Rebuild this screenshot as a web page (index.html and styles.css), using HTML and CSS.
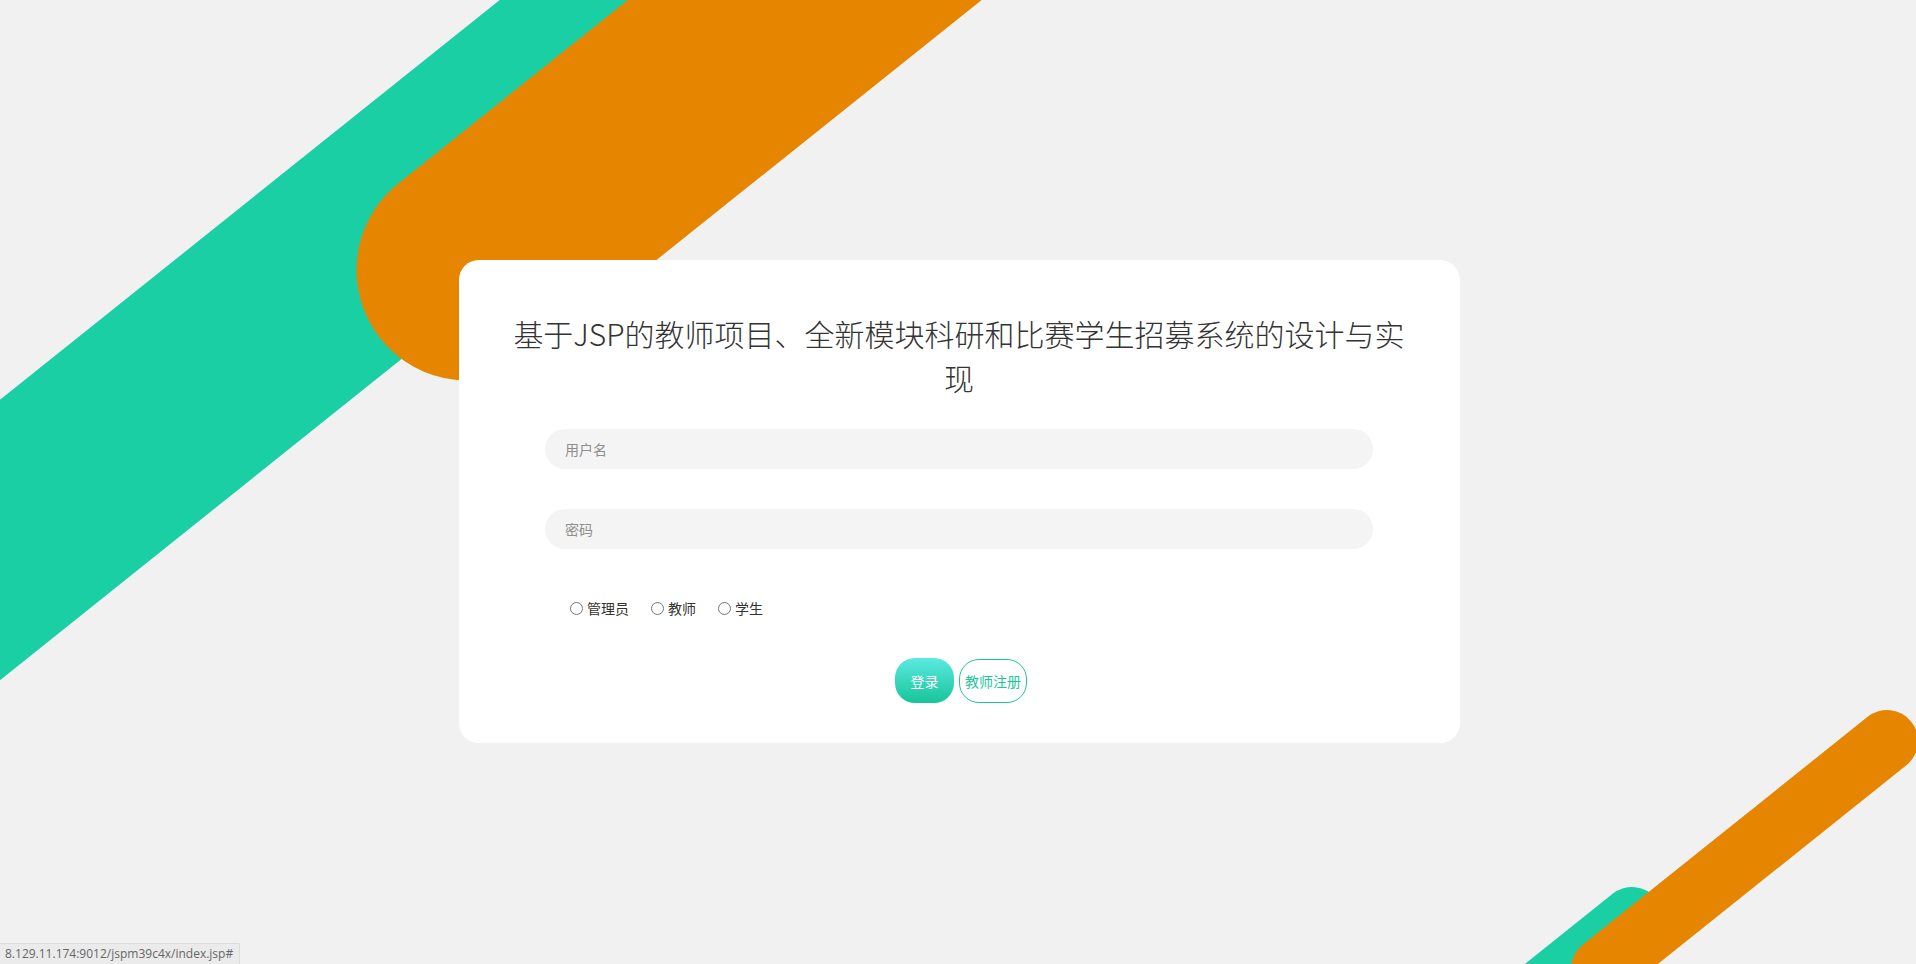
FILE: index.html
```html
<!DOCTYPE html>
<html lang="zh-CN">
<head>
<meta charset="utf-8">
<title>登录</title>
<link rel="stylesheet" href="styles.css">
</head>
<body>
<svg class="bg-shapes" viewBox="0 0 1916 964" width="1916" height="964" aria-hidden="true">
  <line x1="-400" y1="860" x2="1100" y2="-340" stroke="#1bcfa5" stroke-width="219" stroke-linecap="round"/>
  <line x1="467" y1="270" x2="1200" y2="-316" stroke="#e68600" stroke-width="221" stroke-linecap="round"/>
  <line x1="1632" y1="918" x2="1432" y2="1078" stroke="#1bcfa5" stroke-width="62" stroke-linecap="round"/>
  <line x1="1887" y1="741" x2="1602" y2="969" stroke="#e68600" stroke-width="62" stroke-linecap="round"/>
</svg>

<main class="page">
  <form class="card" onsubmit="return false;">
    <h1 class="title">基于JSP的教师项目、全新模块科研和比赛学生招募系统的设计与实现</h1>
    <div class="fields">
      <input class="field" type="text" placeholder="用户名">
      <input class="field" type="password" placeholder="密码">
    </div>
    <div class="roles">
      <label class="role"><input type="radio" name="role" class="radio">管理员</label>
      <label class="role"><input type="radio" name="role" class="radio">教师</label>
      <label class="role"><input type="radio" name="role" class="radio">学生</label>
    </div>
    <div class="actions">
      <button type="button" class="btn btn-login">登录</button>
      <button type="button" class="btn btn-register">教师注册</button>
    </div>
  </form>
</main>

<div class="status">8.129.11.174:9012/jspm39c4x/index.jsp#</div>
</body>
</html>
```

FILE: styles.css
```css
html, body {
  margin: 0;
  padding: 0;
}

body {
  width: 1916px;
  height: 964px;
  overflow: hidden;
  background: #f1f1f1;
  font-family: "Noto Sans CJK SC", "Noto Sans", "Liberation Sans", sans-serif;
  color: #333;
}

.bg-shapes {
  position: fixed;
  left: 0;
  top: 0;
  z-index: 0;
}

.page {
  position: relative;
  z-index: 1;
  display: flex;
  justify-content: center;
  padding-top: 260px;
  padding-left: 2px;
}

.card {
  width: 1001px;
  box-sizing: border-box;
  padding: 51px 40px 40px;
  background: #ffffff;
  border-radius: 20px;
  display: flex;
  flex-direction: column;
  align-items: center;
}

.title {
  margin: 0;
  font-size: 30px;
  line-height: 44px;
  font-weight: 300;
  color: #333;
  text-align: center;
}

.fields {
  width: 828px;
  margin-top: 30px;
  display: flex;
  flex-direction: column;
  gap: 40px;
}

.field {
  height: 40px;
  box-sizing: border-box;
  border: none;
  outline: none;
  border-radius: 20px;
  background: #f4f4f4;
  padding: 0 20px;
  font-family: inherit;
  font-size: 14px;
  color: #333;
}

.field::placeholder {
  color: #8e8e8e;
}

.roles {
  width: 828px;
  box-sizing: border-box;
  margin-top: 49px;
  padding-left: 20px;
  height: 20px;
  display: flex;
  align-items: center;
}

.role {
  display: flex;
  align-items: center;
  font-size: 14px;
  line-height: 20px;
  color: #333;
  margin-right: 17px;
}

.radio {
  width: 13px;
  height: 13px;
  margin: 0 4px 0 5px;
}

.actions {
  margin-top: 40px;
  padding-left: 4px;
  display: flex;
  justify-content: center;
  gap: 5px;
}

.btn {
  height: 45px;
  box-sizing: border-box;
  border-radius: 20px;
  font-family: inherit;
  font-size: 14px;
  cursor: pointer;
  padding: 0;
}

.btn-login {
  width: 59px;
  border: none;
  color: #ffffff;
  background: linear-gradient(to bottom, #5ce9e2, #17c598);
}

.btn-register {
  width: 68px;
  height: 44px;
  margin-top: 1px;
  border: 1px solid #1ec59c;
  background: #ffffff;
  color: #1ec59c;
}

.status {
  position: fixed;
  left: 0;
  bottom: 0;
  z-index: 2;
  height: 21px;
  box-sizing: border-box;
  padding: 0 6px 0 5px;
  background: #ebebeb;
  border-top: 1px solid #dcdcdc;
  border-right: 1px solid #dcdcdc;
  border-top-right-radius: 2px;
  font-family: "Open Sans", "Liberation Sans", sans-serif;
  font-size: 12px;
  line-height: 20px;
  color: #666;
}
```
